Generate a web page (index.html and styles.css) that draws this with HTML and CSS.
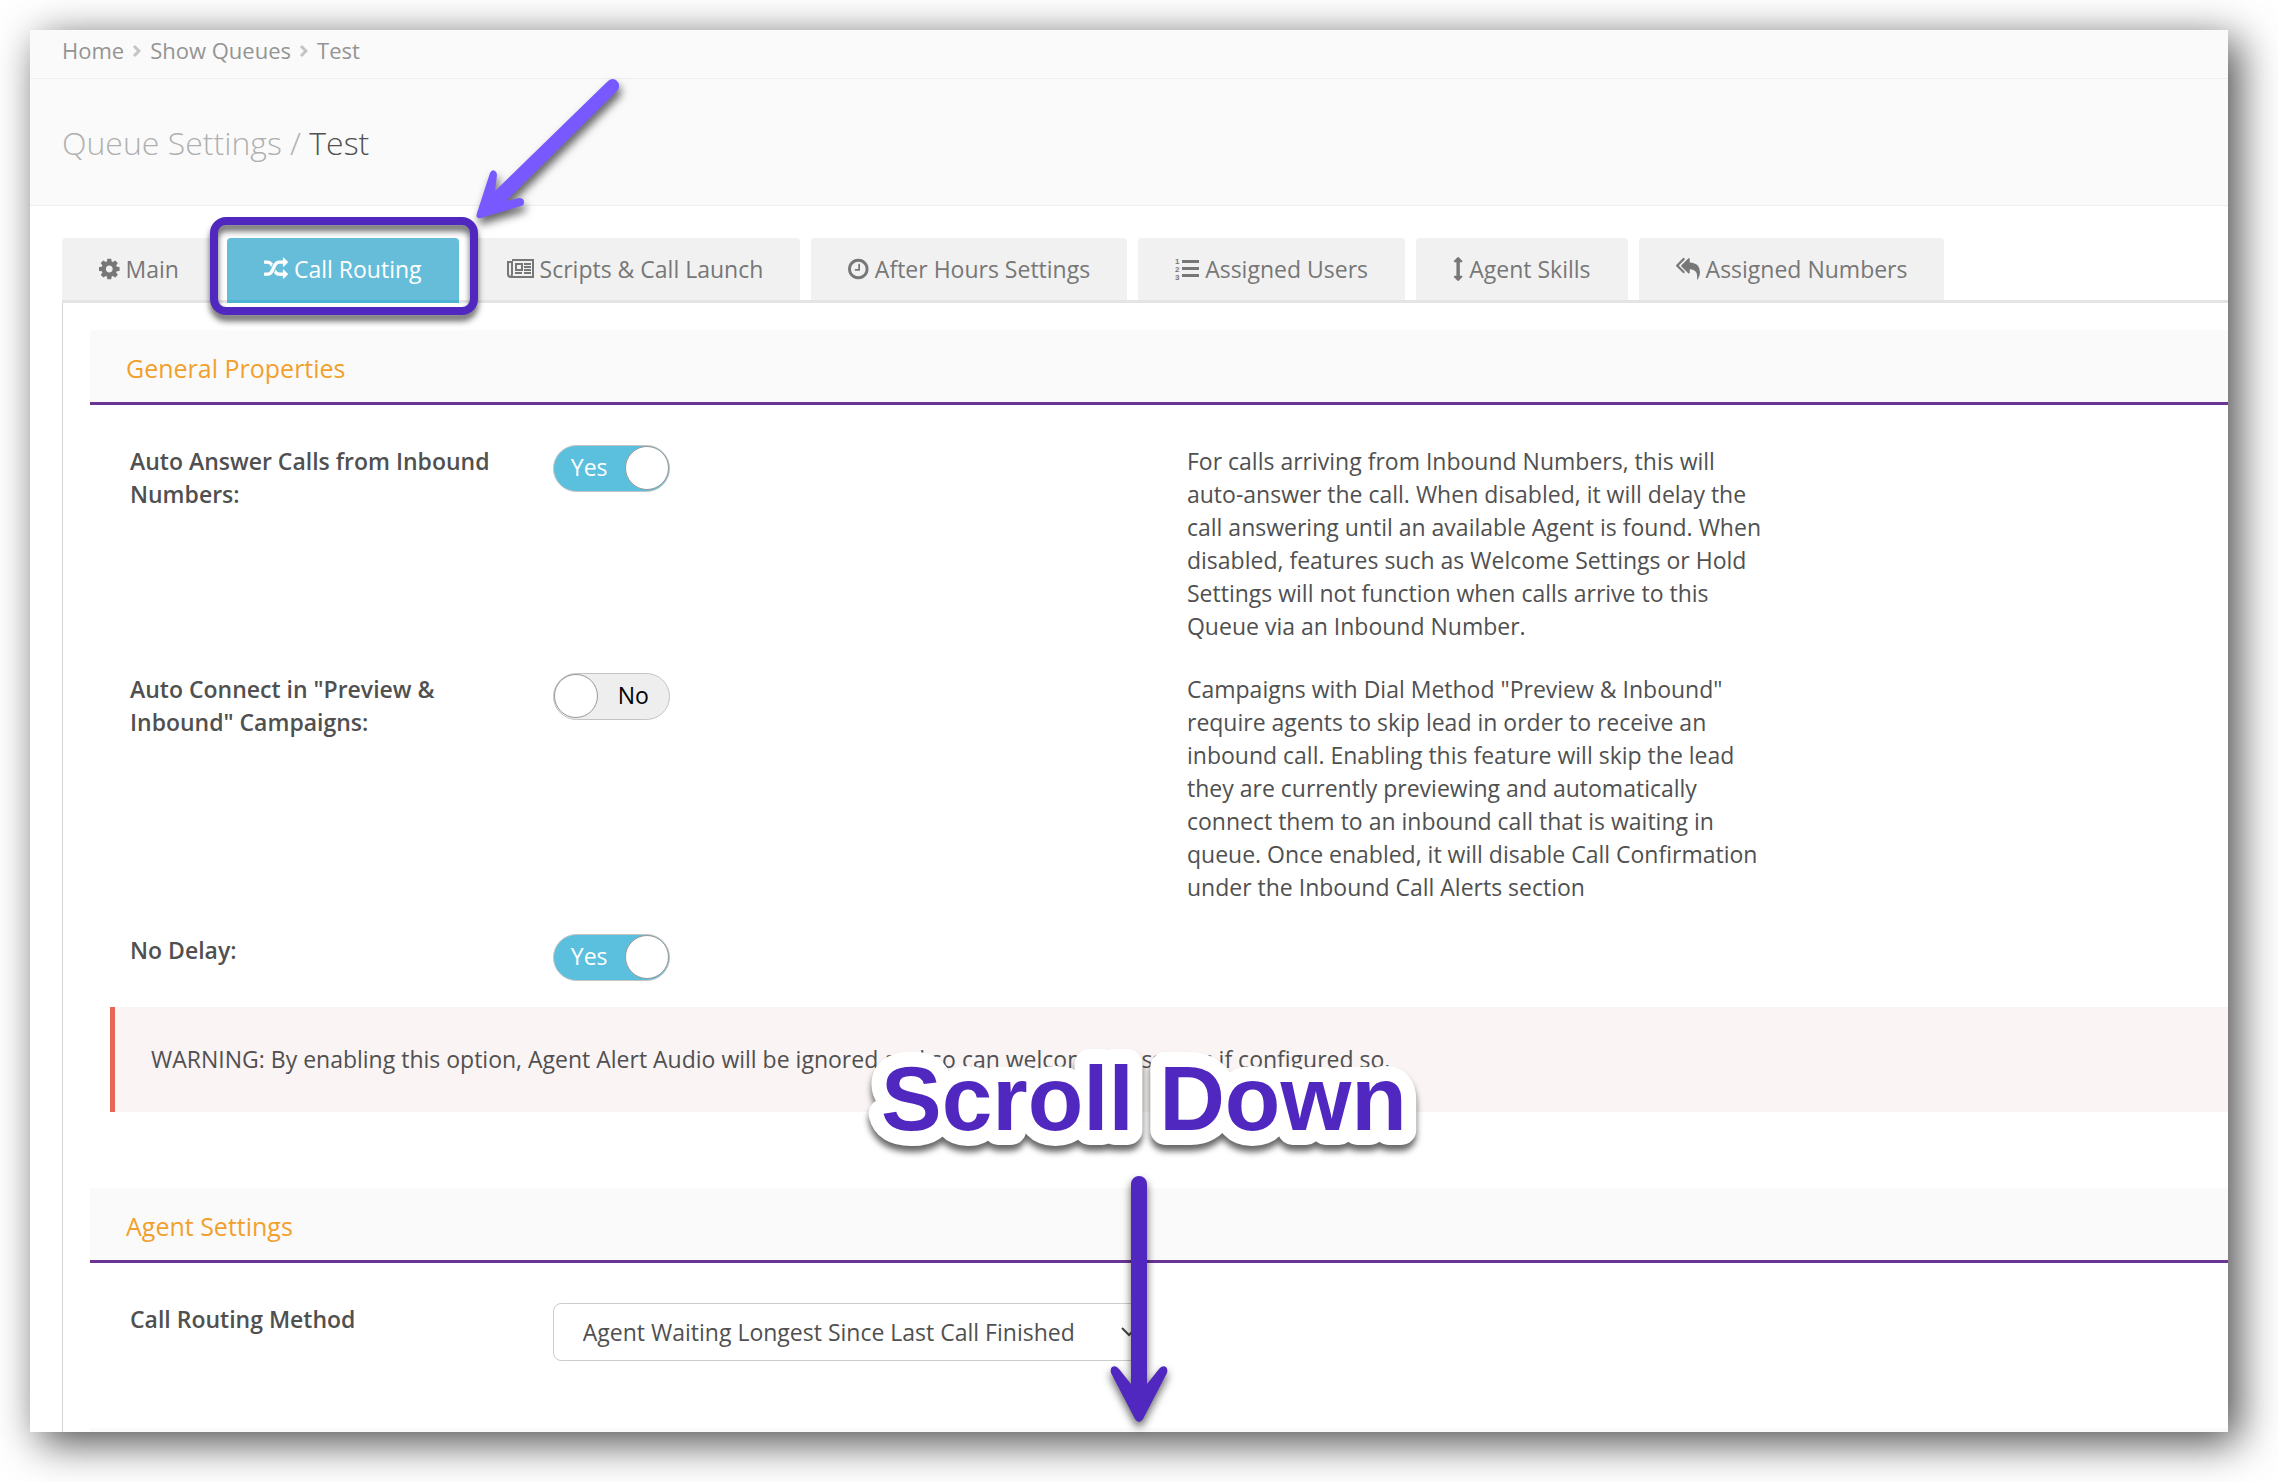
FILE: index.html
```html
<!DOCTYPE html>
<html lang="en">
  <head>
    <meta charset="utf-8">
    <title>Queue Settings / Test</title>
    <link rel="stylesheet" href="styles.css">
  </head>
  <body>
    <div class="window">
      <nav class="breadcrumb">
        <a href="#">Home</a>
        <svg class="sep" viewBox="0 0 9 14"><path d="M2 2l5 5-5 5"/></svg>
        <a href="#">Show Queues</a>
        <svg class="sep" viewBox="0 0 9 14"><path d="M2 2l5 5-5 5"/></svg>
        <span>Test</span>
      </nav>
      <header class="page-header">
        <h1>Queue Settings / <span>Test</span></h1>
      </header>

      <nav class="tabs">
        <a class="tab" href="#">
          <svg class="icon" viewBox="128 0 1536 1792"><path d="M1152 896q0-106-75-181t-181-75-181 75-75 181 75 181 181 75 181-75 75-181zm512-109v222q0 12-8 23t-20 13l-185 28q-19 54-39 91 35 50 107 138 10 12 10 25t-9 23q-27 37-99 108t-94 71q-12 0-26-9l-138-108q-44 23-91 38-16 136-29 186-7 28-36 28h-222q-14 0-24.500-8.500t-11.500-21.500l-28-184q-49-16-90-37l-141 107q-10 9-25 9-14 0-25-11-126-114-165-168-7-10-7-23 0-12 8-23 15-21 51-66.500t54-70.500q-27-50-41-99l-183-27q-13-2-21-12.500t-8-23.500v-222q0-12 8-23t19-13l186-28q14-46 39-92-40-57-107-138-10-12-10-24 0-10 9-23 26-36 98.500-107.500t94.500-71.500q13 0 26 10l138 107q44-23 91-38 16-136 29-186 7-28 36-28h222q14 0 24.500 8.500t11.500 21.500l28 184q49 16 90 37l142-107q9-9 24-9 13 0 25 10 129 119 165 170 7 8 7 22 0 12-8 23-15 21-51 66.500t-54 70.500q26 50 41 98l183 28q13 2 21 12.500t8 23.500z"/></svg>
          Main
        </a>
        <a class="tab active" href="#">
          <svg class="icon" viewBox="0 0 1792 1792"><path d="M666 481q-60 92-137 273-22-45-37-72.500t-40.500-63.500-51-56.500-63-35-81.500-14.500h-224q-14 0-23-9t-9-23v-192q0-14 9-23t23-9h224q250 0 410 225zm1126 799q0 14-9 23l-320 320q-9 9-23 9-13 0-22.500-9.500t-9.500-22.500v-192q-32 0-85 .5t-81 1-73-1-71-5-64-10.500-63-18.500-58-28.500-59-40-55-53.500-56-69.500q59-93 136-273 22 45 37 72.500t40.500 63.500 51 56.500 63 35 81.500 14.500h256v-192q0-14 9-23t23-9q12 0 24 10l319 319q9 9 9 23zm0-896q0 14-9 23l-320 320q-9 9-23 9-13 0-22.500-9.500t-9.500-22.500v-192h-256q-48 0-87 15t-69 45-51 61.500-45 77.500q-32 62-78 171-29 66-49.500 111t-54 105-64 100-74 83-90 68.500-106.500 42-128 16.500h-224q-14 0-23-9t-9-23v-192q0-14 9-23t23-9h224q48 0 87-15t69-45 51-61.500 45-77.500q32-62 78-171 29-66 49.500-111t54-105 64-100 74-83 90-68.500 106.500-42 128-16.500h256v-192q0-14 9-23t23-9q12 0 24 10l319 319q9 9 9 23z"/></svg>
          Call Routing
          <span class="highlight"></span>
        </a>
        <a class="tab" href="#">
          <svg class="icon" viewBox="0 0 27 24"><path class="line" d="M5 3h21v17H4q-3 0-3-3V5h4v12q0 2-1 3M9 7h6v6H9zM17 7h7M17 10h7M17 13h7M8 16h7M17 16h7"/></svg>
          Scripts &amp; Call Launch
        </a>
        <a class="tab" href="#">
          <svg class="icon" viewBox="128 0 1536 1792"><path d="M1024 544v448q0 14-9 23t-23 9h-320q-14 0-23-9t-9-23v-64q0-14 9-23t23-9h224v-352q0-14 9-23t23-9h64q14 0 23 9t9 23zm416 352q0-148-73-273t-198-198-273-73-273 73-198 198-73 273 73 273 198 198 273 73 273-73 198-198 73-273zm224 0q0 209-103 385.500t-279.500 279.500-385.500 103-385.500-103-279.500-279.500-103-385.500 103-385.500 279.500-279.500 385.500-103 385.500 103 279.500 279.500 103 385.500z"/></svg>
          After Hours Settings
        </a>
        <a class="tab" href="#">
          <svg class="icon" viewBox="0 0 24 24"><path d="M7 3h17v3H7zM7 10h17v3H7zM7 17h17v3H7z"/><g class="digits"><text x="0" y="7">1</text><text x="0" y="15">2</text><text x="0" y="23">3</text></g></svg>
          Assigned Users
        </a>
        <a class="tab" href="#">
          <svg class="icon" viewBox="512 0 768 1792"><path d="M1216 320q0 26-19 45t-45 19h-128v1024h128q26 0 45 19t19 45-19 45l-256 256q-19 19-45 19t-45-19l-256-256q-19-19-19-45t19-45 45-19h128v-1024h-128q-26 0-45-19t-19-45 19-45l256-256q19-19 45-19t45 19l256 256q19 19 19 45z"/></svg>
          Agent Skills
        </a>
        <a class="tab" href="#">
          <svg class="icon" viewBox="0 0 1792 1792"><path d="M640 1082v70q0 42-39 59-13 5-25 5-27 0-45-19l-512-512q-19-19-19-45t19-45l512-512q29-31 70-14 39 17 39 59v69l-397 398q-19 19-19 45t19 45zm1152 58q0 58-17 133.500t-38.500 138-48 125-40.500 90.500l-20 40q-8 17-28 17-6 0-9-1-25-8-23-34 43-400-106-565-64-71-170.500-110.500t-267.500-52.500v251q0 42-39 59-13 5-25 5-27 0-45-19l-512-512q-19-19-19-45t19-45l512-512q29-31 70-14 39 17 39 59v262q411 28 599 221 169 173 169 509z"/></svg>
          Assigned Numbers
        </a>
      </nav>

      <main class="panel">
        <section class="section">
          <h2>General Properties</h2>
          <div class="rows">
            <div class="row">
              <label class="name" for="auto-answer">Auto Answer Calls from Inbound Numbers:</label>
              <div class="control">
                <label class="switch">
                  <input type="checkbox" id="auto-answer" checked>
                  <span class="on">Yes</span><span class="off">No</span>
                </label>
              </div>
              <p>For calls arriving from Inbound Numbers, this will auto-answer the call. When disabled, it will delay the call answering until an available Agent is found. When disabled, features such as Welcome Settings or Hold Settings will not function when calls arrive to this Queue via an Inbound Number.</p>
            </div>
            <div class="row">
              <label class="name" for="auto-connect">Auto Connect in "Preview &amp; Inbound" Campaigns:</label>
              <div class="control">
                <label class="switch">
                  <input type="checkbox" id="auto-connect">
                  <span class="on">Yes</span><span class="off">No</span>
                </label>
              </div>
              <p>Campaigns with Dial Method "Preview &amp; Inbound" require agents to skip lead in order to receive an inbound call. Enabling this feature will skip the lead they are currently previewing and automatically connect them to an inbound call that is waiting in queue. Once enabled, it will disable Call Confirmation under the Inbound Call Alerts section</p>
            </div>
            <div class="row">
              <label class="name" for="no-delay">No Delay:</label>
              <div class="control">
                <label class="switch">
                  <input type="checkbox" id="no-delay" checked>
                  <span class="on">Yes</span><span class="off">No</span>
                </label>
              </div>
            </div>
          </div>
          <div class="warning">WARNING: By enabling this option, Agent Alert Audio will be ignored and so can welcome messages if configured so.</div>
        </section>

        <section class="section">
          <h2>Agent Settings</h2>
          <div class="rows">
            <div class="row">
              <label class="name" for="routing-method">Call Routing Method</label>
              <div class="control">
                <div class="select">
                  <select id="routing-method">
                    <option>Agent Waiting Longest Since Last Call Finished</option>
                  </select>
                  <svg class="chevron" viewBox="0 0 16 10"><path d="M1 1l7 7 7-7"/></svg>
                </div>
              </div>
            </div>
          </div>
        </section>

        <section class="section">
          <h2></h2>
        </section>
      </main>
    </div>

    <!-- help annotations drawn over the page -->
    <svg class="annotations">
      <path class="arrow-light" d="M607 82Q611 77 616 80Q621 84 618 90L506 201L519 198Q524 198 524 202Q524 205 521 206L481 218Q475 219 477 213L490 173Q492 169 495 171Q497 172 497 175L495 191Z"/>
      <text class="callout" x="881" y="1130">Scroll Down</text>
      <path class="arrow-dark" d="M1131 1184a8 8 0 0 1 16 0V1384L1159 1369Q1162 1365 1166 1367Q1168 1369 1167 1373L1143 1419Q1139 1425 1135 1419L1111 1373Q1110 1369 1112 1367Q1116 1365 1119 1369L1131 1384Z"/>
    </svg>
  </body>
</html>
```
FILE: styles.css
```css
* {
  box-sizing: border-box;
}
body {
  margin: 0;
  padding: 30px 50px 50px 30px;
  height: 100vh;
  overflow: hidden;
  background-color: #ffffff;
  color: #505050;
  font-family: "Open Sans", sans-serif;
  font-size: 23px;
  line-height: 33px;
}
a {
  color: inherit;
  text-decoration: none;
}
h1, h2, p {
  margin: 0;
}
.window {
  height: 100%;
  overflow: hidden;
  display: flex;
  flex-direction: column;
  background-color: #ffffff;
  box-shadow: 10px 10px 40px rgba(0, 0, 0, 0.72);
}
/* Breadcrumb and title */
.breadcrumb {
  display: flex;
  align-items: center;
  flex-shrink: 0;
  height: 49px;
  padding: 0 32px 8px;
  background-color: #fafafa;
  border-bottom: 1px solid #eeeeee;
  color: #949494;
  font-size: 22px;
}
.sep {
  width: 9px;
  height: 14px;
  margin: 2px 9px 0 8px;
  fill: none;
  stroke: #c4c4c4;
  stroke-width: 3;
}
.page-header {
  display: flex;
  align-items: center;
  flex-shrink: 0;
  height: 127px;
  padding: 0 32px;
  background-color: #fafafa;
  border-bottom: 1px solid #eeeeee;
}
.page-header h1 {
  color: #b0b0b0;
  font-size: 32px;
  font-weight: 300;
}
.page-header h1 span {
  color: #505050;
}
/* Tabs */
.tabs {
  display: flex;
  flex-shrink: 0;
  gap: 11px;
  margin: 32px 0 0 32px;
  border-bottom: 3px solid #e4e4e4;
}
.tab {
  position: relative;
  display: flex;
  align-items: center;
  gap: 6px;
  height: 62px;
  padding: 0 37px;
  background-color: #f1f1f1;
  border-radius: 4px 4px 0 0;
  color: #777777;
}
.tab.active {
  height: 65px;
  margin-bottom: -3px;
  background-color: #66bdd9;
  border-bottom: 3px solid #4db3d3;
  color: #ffffff;
}
.icon {
  height: 24px;
  fill: currentColor;
}
.icon .line {
  fill: none;
  stroke: currentColor;
  stroke-width: 2;
}
.digits {
  font-family: "Liberation Sans", sans-serif;
  font-size: 8px;
  font-weight: bold;
}
.highlight {
  position: absolute;
  z-index: 1;
  inset: -21px -19px -15px -17px;
  border: 8px solid #5028c0;
  border-radius: 16px;
  filter: drop-shadow(0 6px 3px rgba(0, 0, 0, 0.6));
}
/* Settings panel */
.panel {
  flex: 1;
  min-height: 0;
  margin-left: 32px;
  padding: 27px 0 0 27px;
  border-left: 1px solid #d4d4d4;
}
.section h2 {
  height: 75px;
  padding: 22px 36px;
  background-color: #fafafa;
  border-bottom: 3px solid #6a3494;
  color: #f2a02c;
  font-size: 25px;
  font-weight: 400;
}
.rows {
  display: flex;
  flex-direction: column;
  gap: 30px;
  padding: 40px 0 0 40px;
}
.row {
  display: grid;
  grid-template-columns: 2fr 3fr 3fr 2fr;
  align-items: start;
  margin-right: -16px;
}
.row > * {
  padding-right: 42px;
}
.row > p {
  padding-right: 50px;
}
.name {
  font-weight: 600;
}
.switch {
  position: relative;
  display: flex;
  align-items: center;
  justify-content: flex-end;
  width: 117px;
  height: 47px;
  padding: 0 20px 2px;
  border: 1px solid #c4c4c4;
  border-radius: 24px;
  background-color: #eeeeee;
  color: #000000;
  cursor: pointer;
}
.switch input {
  appearance: none;
  position: absolute;
  left: 0;
  top: 0;
  width: 44px;
  height: 44px;
  margin: 0;
  border: 1px solid #999999;
  border-radius: 50%;
  background-color: #ffffff;
  cursor: pointer;
}
.switch .on {
  display: none;
}
.switch:has(input:checked) {
  justify-content: flex-start;
  padding: 0 17px 2px;
  background-color: #5bc0de;
  color: #ffffff;
}
.switch input:checked {
  left: auto;
  right: 0;
}
.switch input:checked ~ .on {
  display: inline;
}
.switch input:checked ~ .off {
  display: none;
}
.warning {
  margin: 26px 0 76px 20px;
  padding: 36px;
  border-left: 5px solid #e96656;
  background-color: #faf4f4;
}
.select {
  position: relative;
  margin-bottom: 67px;
}
.select select {
  appearance: none;
  display: block;
  width: 100%;
  height: 58px;
  padding: 0 29px;
  border: 1px solid #cccccc;
  border-radius: 8px;
  background-color: #ffffff;
  color: #505050;
  font: inherit;
}
.chevron {
  position: absolute;
  right: 8px;
  top: 24px;
  width: 16px;
  height: 10px;
  fill: none;
  stroke: #444444;
  stroke-width: 2;
}
/* Annotations */
.annotations {
  position: absolute;
  left: 0;
  top: 0;
  width: 100%;
  height: 100%;
  pointer-events: none;
}
.arrow-light {
  fill: #7858ff;
  filter: drop-shadow(2px 6px 4px rgba(0, 0, 0, 0.6));
}
.arrow-dark {
  fill: #5028c0;
  filter: drop-shadow(0 5px 4px rgba(0, 0, 0, 0.6));
}
.callout {
  fill: #5028c0;
  stroke: #ffffff;
  stroke-width: 30px;
  stroke-linejoin: round;
  paint-order: stroke;
  font-family: "Liberation Sans", Arial, sans-serif;
  font-size: 91px;
  font-weight: bold;
  filter: drop-shadow(0 6px 3px rgba(0, 0, 0, 0.6));
}
```
